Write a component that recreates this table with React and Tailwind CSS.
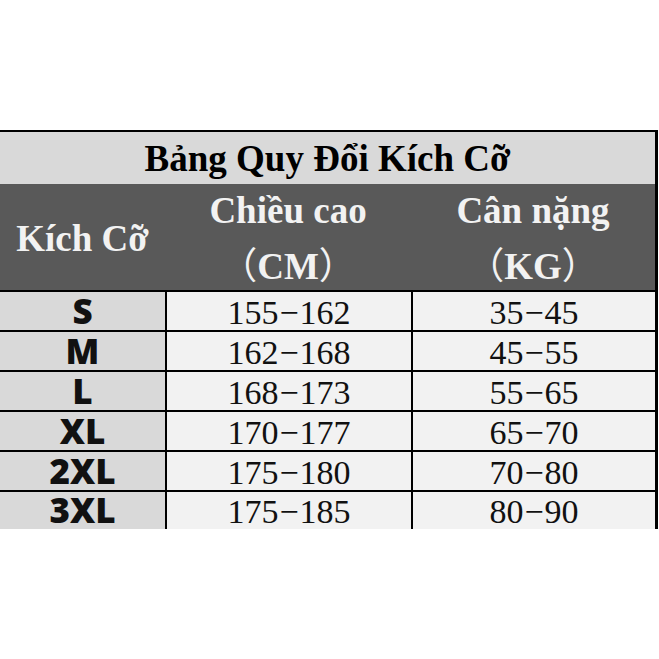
export default function App() {
  const rows = [
    ["S", "155", "162", "35", "45"],
    ["M", "162", "168", "45", "55"],
    ["L", "168", "173", "55", "65"],
    ["XL", "170", "177", "65", "70"],
    ["2XL", "175", "180", "70", "80"],
    ["3XL", "175", "185", "80", "90"],
  ];
  const serif = { fontFamily: '"Liberation Serif", "Noto Sans CJK SC", serif' };
  return (
    <div className="w-[659px] h-[659px] bg-white overflow-hidden">
      <div className="h-[130px]" />
      <div className="w-[658px] border-t-2 border-r-[3px] border-black">
        <div
          className="h-[52px] bg-[#d9d9d9] flex items-center justify-center font-bold text-[37px] text-black leading-none"
          style={serif}
        >
          Bảng Quy Đổi Kích Cỡ
        </div>
        <div
          className="h-[106px] bg-[#595959] grid grid-cols-[165px_246px_244px] text-[#f2f2f2] font-bold text-[37px] leading-[53px]"
          style={serif}
        >
          <div className="flex items-center justify-center">Kích Cỡ</div>
          <div className="flex flex-col items-center justify-center">
            <span>Chiều cao</span>
            <span className="font-['Noto_Sans_CJK_SC',sans-serif] font-normal">
              （<span className="font-bold" style={serif}>CM</span>）
            </span>
          </div>
          <div className="flex flex-col items-center justify-center">
            <span>Cân nặng</span>
            <span className="font-['Noto_Sans_CJK_SC',sans-serif] font-normal">
              （<span className="font-bold" style={serif}>KG</span>）
            </span>
          </div>
        </div>
        {rows.map((r, i) => (
          <div
            key={r[0]}
            className={`grid grid-cols-[165px_246px_244px] border-t-2 border-black ${
              i === rows.length - 1 ? "h-[39px]" : "h-[40px]"
            }`}
          >
            <div className="bg-[#d9d9d9] flex items-center justify-center font-['Open_Sans',sans-serif] font-extrabold text-[35px] text-[#111] leading-none pb-[2px]">
              {r[0]}
            </div>
            <div
              className="bg-[#f2f2f2] border-l-2 border-black flex items-center justify-center text-[34px] text-[#111] leading-none pt-[3px]"
              style={serif}
            >
              {r[1]}
              <span className="mx-[1px]">−</span>
              {r[2]}
            </div>
            <div
              className="bg-[#f2f2f2] border-l-2 border-black flex items-center justify-center text-[34px] text-[#111] leading-none pt-[3px]"
              style={serif}
            >
              {r[3]}
              <span className="mx-[1px]">−</span>
              {r[4]}
            </div>
          </div>
        ))}
      </div>
    </div>
  );
}
